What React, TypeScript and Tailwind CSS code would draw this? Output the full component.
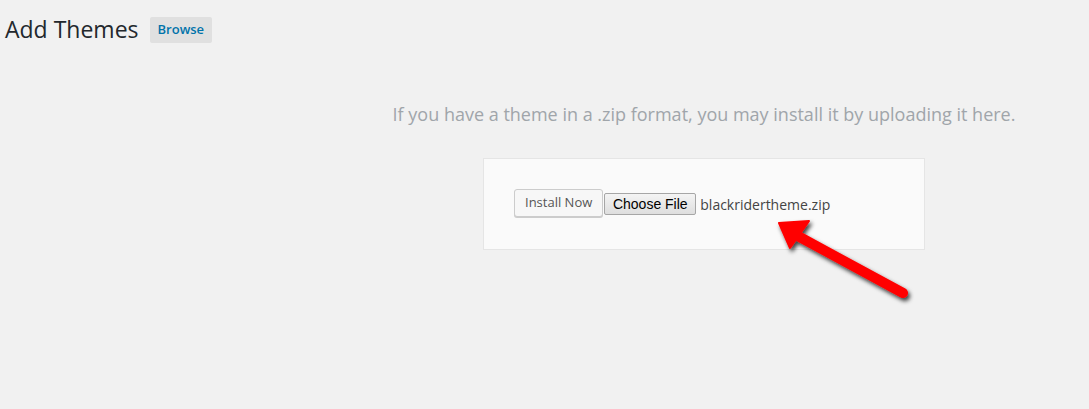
export default function App() {
  return (
    <div className="relative h-[409px] w-full overflow-hidden bg-[#f1f1f1] font-['Open_Sans',sans-serif]">
      <div className="flex items-center pl-[5px] pt-[15px]">
        <h1 className="text-[23px] leading-[29px] font-normal text-[#23282d]">Add Themes</h1>
        <button
          type="button"
          className="ml-[11px] h-[26px] rounded-[2px] bg-[#e0e0e0] px-[8px] text-[13px] font-semibold text-[#0073aa]"
        >
          Browse
        </button>
      </div>

      <div className="flex w-[1408px] flex-col items-center">
        <p className="mt-[58px] text-[18px] leading-[24px] text-[#a0a5aa]">
          If you have a theme in a .zip format, you may install it by uploading it here.
        </p>
        <div className="mt-[32px] flex h-[92px] w-[442px] items-start border border-[#e5e5e5] bg-[#fafafa] pl-[30px] pt-[30px]">
          <button
            type="button"
            className="h-[28px] rounded-[3px] border border-[#cccccc] bg-[#f7f7f7] px-[10px] text-[13px] text-[#555] shadow-[0_1px_0_#cccccc]"
          >
            Install Now
          </button>
          <div className="ml-[1px] mt-[4px] flex items-center">
            <button
              type="button"
              className="h-[22px] w-[92px] rounded-[2px] border border-[#a6a6a6] bg-gradient-to-b from-[#f4f4f4] to-[#dedede] text-[14px] font-['Liberation_Sans',Arial,sans-serif] text-black"
            >
              Choose File
            </button>
            <span className="ml-[4px] text-[14px] text-[#444]">blackridertheme.zip</span>
          </div>
        </div>
      </div>

      <svg className="pointer-events-none absolute left-0 top-0" width="1089" height="409">
        <defs>
          <filter id="sh" x="-20%" y="-20%" width="140%" height="140%">
            <feDropShadow dx="2" dy="3" stdDeviation="2" floodColor="#000" floodOpacity="0.75" />
          </filter>
        </defs>
        <g filter="url(#sh)">
          <line x1="796" y1="235" x2="903" y2="293" stroke="#ff0000" strokeWidth="10" strokeLinecap="round" />
          <polygon points="779,223 809,221 790,248" fill="#ff0000" stroke="#ff0000" strokeWidth="2" strokeLinejoin="round" />
        </g>
      </svg>
    </div>
  );
}
